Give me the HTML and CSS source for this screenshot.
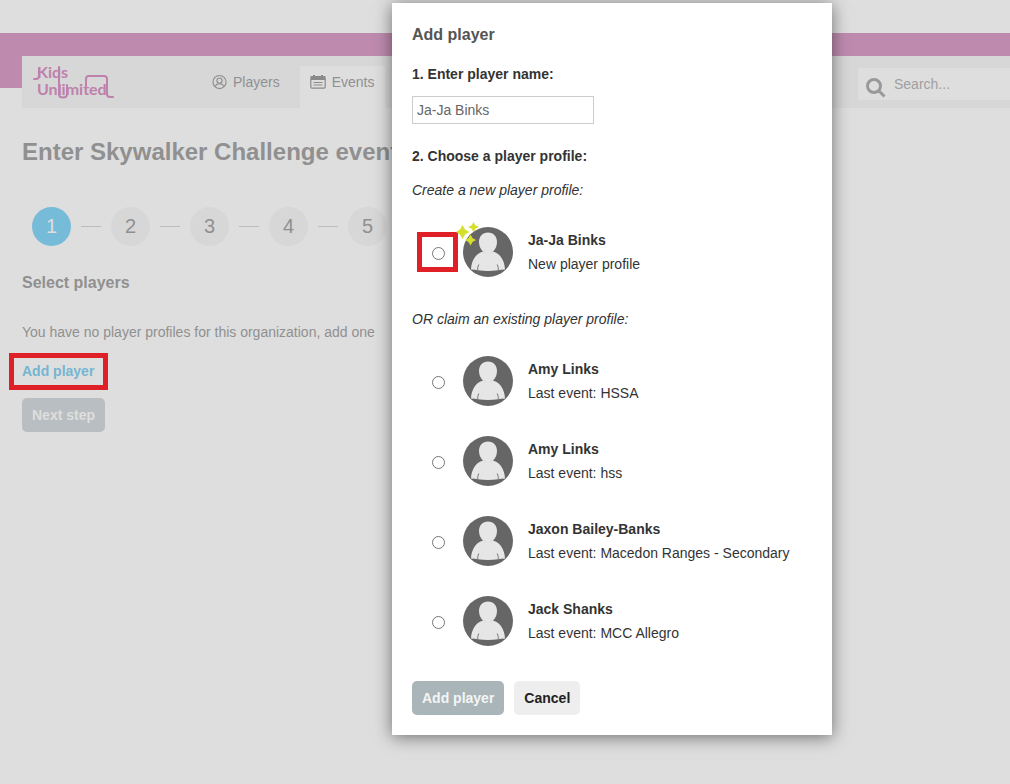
FILE: index.html
```
<!DOCTYPE html>
<html lang="en">
<head>
<meta charset="utf-8">
<title>Enter Skywalker Challenge event</title>
<link rel="stylesheet" href="styles.css">
</head>
<body>
<svg class="symbols" aria-hidden="true">
  <symbol id="avatar" viewBox="0 0 50 50">
    <circle cx="25" cy="25" r="25" fill="#666"/>
    <path d="M8 42.500C8.500 33 13 26.500 20 24.500q5 2.500 10 0c7 2 11.500 8.500 12 18q-4 .2-7 .8-10 1.500-20 0-3-.6-7-.8z" fill="#e6e6e6"/>
    <path d="M25 5.500c5.500 0 9 4 9 9.500 0 4-1.500 7-3.500 9-2.500 3-8.500 3-11 0-2-2-3.500-5-3.500-9 0-5.500 3.500-9.500 9-9.500z" fill="#e6e6e6"/>
    <path d="M15 43.500c-.8-2 0-4 .8-6M35 43.500c.8-2 0-4-.8-6" fill="none" stroke="#777" stroke-width="1"/>
  </symbol>
</svg>

<div class="page">
  <div class="band">
    <header class="header">
      <a class="logo" href="#" aria-label="Kids Unlimited">
        <svg width="84" height="36" viewBox="0 0 84 36">
          <text x="4" y="13" class="logo-text">Kids</text>
          <text x="4" y="30" class="logo-text">Unlimited</text>
          <path d="M6 3v8q0 3-3 3H1M26 2v27q0 3.500 4 3.500t4-3.500V20M53 20v-6q0-3 3-3h15q3 0 3 3v15q0 3 3 3h3"/>
        </svg>
      </a>
      <nav class="nav">
        <a class="tab" href="#">
          <svg width="15" height="16" viewBox="0 0 16 16" fill="none" stroke="#8e8e8e" stroke-width="1.200"><circle cx="8" cy="8" r="7"/><circle cx="8" cy="6.500" r="2.800"/><path d="M3.500 13q.7-3.200 4.500-3.200t4.500 3.200"/></svg>
          Players
        </a>
        <a class="tab tab-active" href="#">
          <svg width="16" height="16" viewBox="0 0 16 16"><path d="M.5 2h15v4H.5z" fill="#8a8a8a"/><path d="M.8 4.500v8.500q0 1.200 1.200 1.200h12q1.200 0 1.200-1.200V4.500M3.500 8.500h9M3.500 11h9" fill="none" stroke="#8a8a8a" stroke-width="1.200"/><path d="M4 1v4M12 1v4" stroke="#8a8a8a" stroke-width="2"/></svg>
          Events
        </a>
      </nav>
      <label class="search">
        <svg width="20" height="20" viewBox="0 0 20 20" fill="none" stroke="#999" stroke-width="3"><circle cx="8" cy="8" r="6.500"/><path d="M12.500 12.500l6 6"/></svg>
        <input type="search" placeholder="Search..." aria-label="Search">
      </label>
    </header>
  </div>

  <main class="main">
    <h1 class="title">Enter Skywalker Challenge event</h1>
    <ol class="steps">
      <li class="step step-current">1</li>
      <li class="step">2</li>
      <li class="step">3</li>
      <li class="step">4</li>
      <li class="step">5</li>
    </ol>
    <h2 class="subtitle">Select players</h2>
    <p class="empty">You have no player profiles for this organization, add one</p>
    <a class="add-link" href="#">Add player</a>
    <button class="button button-next" type="button">Next step</button>
  </main>
</div>

<form class="dialog" role="dialog" aria-labelledby="dialog-title">
  <h2 class="dialog-title" id="dialog-title">Add player</h2>
  <label class="heading" for="name">1. Enter player name:</label>
  <input class="name" id="name" type="text" value="Ja-Ja Binks">
  <h3 class="heading">2. Choose a player profile:</h3>
  <p class="hint">Create a new player profile:</p>
  <label class="profile">
    <span class="pick pick-marked"><input type="radio" name="profile"></span>
    <span class="avatar">
      <svg width="50" height="50"><use href="#avatar"/></svg>
      <svg class="sparkles" width="24" height="24" viewBox="0 0 24 24" fill="#d4e02c"><path d="M6.500 3l2.500 4.500 4.500 2.500L9 12.500 6.500 17 4 12.500 0 10l4-2.500z"/><path d="M17.500 0l1.800 3.200L23 5l-3.700 1.800-1.800 3.700-1.800-3.700L12 5l3.700-1.800z"/><path d="M14.500 12.500l2 3.500 3.500 2-3.500 2-2 3.500-2-3.500L9 18l3.500-2z"/></svg>
    </span>
    <span class="info"><strong>Ja-Ja Binks</strong><span>New player profile</span></span>
  </label>
  <p class="hint hint-claim">OR claim an existing player profile:</p>
  <label class="profile">
    <span class="pick"><input type="radio" name="profile"></span>
    <span class="avatar"><svg width="50" height="50"><use href="#avatar"/></svg></span>
    <span class="info"><strong>Amy Links</strong><span>Last event: HSSA</span></span>
  </label>
  <label class="profile">
    <span class="pick"><input type="radio" name="profile"></span>
    <span class="avatar"><svg width="50" height="50"><use href="#avatar"/></svg></span>
    <span class="info"><strong>Amy Links</strong><span>Last event: hss</span></span>
  </label>
  <label class="profile">
    <span class="pick"><input type="radio" name="profile"></span>
    <span class="avatar"><svg width="50" height="50"><use href="#avatar"/></svg></span>
    <span class="info"><strong>Jaxon Bailey-Banks</strong><span>Last event: Macedon Ranges - Secondary</span></span>
  </label>
  <label class="profile">
    <span class="pick"><input type="radio" name="profile"></span>
    <span class="avatar"><svg width="50" height="50"><use href="#avatar"/></svg></span>
    <span class="info"><strong>Jack Shanks</strong><span>Last event: MCC Allegro</span></span>
  </label>
  <div class="actions">
    <button class="button button-add" type="button">Add player</button>
    <button class="button button-cancel" type="button">Cancel</button>
  </div>
</form>
</body>
</html>
```
FILE: styles.css
```
* { box-sizing: border-box; }
body {
  margin: 0;
  background: #dedede;
  color: #333;
  font: 14px/24px "Liberation Sans", Arial, sans-serif;
}
h1, h2, h3, p, ol { margin: 0; padding: 0; }
a { text-decoration: none; color: inherit; }
svg { display: block; flex: none; }
input, button { font: inherit; color: inherit; }
.symbols { position: absolute; width: 0; height: 0; }

.page { padding-top: 33px; color: #909090; }
.band {
  padding: 23px 0 0 22px;
  background: linear-gradient(#be8baf 55px, #dedede 55px);
}
.header {
  display: flex;
  height: 52px;
  background: #d7d7d7;
}
.logo { padding: 9px 0 0 11px; width: 180px; }
.logo path { fill: none; stroke: #bf80ac; stroke-width: 2; stroke-linecap: round; }
.logo-text { font: bold 16px Lato, sans-serif; fill: #bf80ac; }
.nav { display: flex; padding-top: 10px; }
.tab {
  display: flex;
  align-items: center;
  gap: 6px;
  padding: 0 10px 10px;
}
.tab + .tab { margin-left: 10px; }
.tab-active { background: #dedede; }
.search {
  display: flex;
  flex: none;
  width: 152px;
  height: 32px;
  margin: 12px 0 0 auto;
  padding: 10px 0 0 8px;
  gap: 8px;
  background: #dedede;
}
.search input {
  width: 100px;
  height: 16px;
  margin-top: -2px;
  padding: 0;
  border: 0;
  background: none;
}
.search input::placeholder { color: #a0a0a0; }

.main { padding: 28px 22px; }
.title { font-size: 24px; line-height: 32px; white-space: nowrap; }
.steps {
  display: flex;
  gap: 40px;
  padding: 39px 10px 0;
  list-style: none;
}
.step {
  position: relative;
  width: 39px;
  height: 39px;
  border-radius: 50%;
  background: #d7d7d7;
  font-size: 20px;
  line-height: 39px;
  text-align: center;
}
.step + .step::before {
  content: "";
  position: absolute;
  top: 19px;
  right: 49px;
  width: 20px;
  border-top: 1px solid #bdbdbd;
}
.step-current { background: #76bcd8; color: #dedede; }
.subtitle { margin-top: 25px; font-size: 16px; line-height: 24px; }
.empty { margin-top: 25px; white-space: nowrap; }
.add-link {
  display: table;
  margin: 9px 0 0 -13px;
  padding: 1px 9px 2px 8px;
  border: 5px solid #df2127;
  color: #75b5d1;
  font-weight: bold;
}
.button {
  height: 34px;
  padding: 0 10px;
  border: 0;
  border-radius: 5px;
  font-weight: bold;
  line-height: 34px;
}
.button-next { margin-top: 8px; background: #b9bec2; color: #dedede; }

.dialog {
  position: absolute;
  top: 3px;
  left: 392px;
  width: 440px;
  padding: 20px;
  background: #fff;
  box-shadow: 0 2px 16px rgba(0, 0, 0, .5);
}
.dialog-title { font-size: 16px; line-height: 24px; color: #555; }
.heading { display: block; margin-top: 15px; font-size: 14px; line-height: 24px; font-weight: bold; }
.name {
  display: block;
  width: 182px;
  height: 28px;
  margin: 10px 0 20px;
  padding: 0 4px;
  border: 1px solid #ccc;
  color: #666;
}
.hint { margin-top: 10px; margin-bottom: 10px; font-style: italic; }
.hint-claim { margin-top: 15px; }
.profile {
  display: flex;
  align-items: center;
  height: 80px;
  padding-left: 5px;
}
.pick {
  display: flex;
  align-items: center;
  justify-content: center;
  width: 41px;
  height: 40px;
  border: 5px solid transparent;
}
.pick-marked { border-color: #df2127; }
.pick input { width: 13px; height: 13px; margin: 2px 0 0 1px; }
.avatar { position: relative; margin: 0 15px 0 5px; }
.sparkles { position: absolute; top: -5px; left: -7px; }
.info { display: flex; flex-direction: column; }
.actions { display: flex; gap: 10px; margin-top: 20px; }
.button-add { background: #a9b5b9; color: #f3f5f5; }
.button-cancel { background: #eee; color: #222; }
```
